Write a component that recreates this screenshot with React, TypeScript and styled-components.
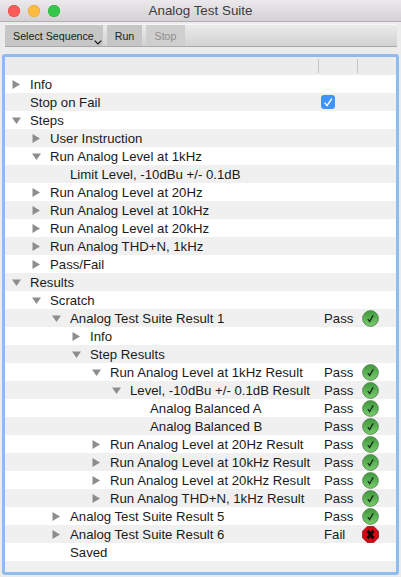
import styled, { createGlobalStyle } from "styled-components";

const GlobalStyle = createGlobalStyle`
  html, body {
    margin: 0;
    padding: 0;
    background: #ececec;
  }
  body {
    font-family: "Liberation Sans", Arial, sans-serif;
    color: #1a1a1a;
  }
`;

type Status = "pass" | "fail";

type RowData = {
  label: string;
  level: number;
  arrow?: "closed" | "open";
  result?: Status;
  checked?: boolean;
};

const rows: RowData[] = [
  { label: "Info", level: 0, arrow: "closed" },
  { label: "Stop on Fail", level: 0, checked: true },
  { label: "Steps", level: 0, arrow: "open" },
  { label: "User Instruction", level: 1, arrow: "closed" },
  { label: "Run Analog Level at 1kHz", level: 1, arrow: "open" },
  { label: "Limit Level, -10dBu +/- 0.1dB", level: 2 },
  { label: "Run Analog Level at 20Hz", level: 1, arrow: "closed" },
  { label: "Run Analog Level at 10kHz", level: 1, arrow: "closed" },
  { label: "Run Analog Level at 20kHz", level: 1, arrow: "closed" },
  { label: "Run Analog THD+N, 1kHz", level: 1, arrow: "closed" },
  { label: "Pass/Fail", level: 1, arrow: "closed" },
  { label: "Results", level: 0, arrow: "open" },
  { label: "Scratch", level: 1, arrow: "open" },
  { label: "Analog Test Suite Result 1", level: 2, arrow: "open", result: "pass" },
  { label: "Info", level: 3, arrow: "closed" },
  { label: "Step Results", level: 3, arrow: "open" },
  { label: "Run Analog Level at 1kHz Result", level: 4, arrow: "open", result: "pass" },
  { label: "Level, -10dBu +/- 0.1dB Result", level: 5, arrow: "open", result: "pass" },
  { label: "Analog Balanced A", level: 6, result: "pass" },
  { label: "Analog Balanced B", level: 6, result: "pass" },
  { label: "Run Analog Level at 20Hz Result", level: 4, arrow: "closed", result: "pass" },
  { label: "Run Analog Level at 10kHz Result", level: 4, arrow: "closed", result: "pass" },
  { label: "Run Analog Level at 20kHz Result", level: 4, arrow: "closed", result: "pass" },
  { label: "Run Analog THD+N, 1kHz Result", level: 4, arrow: "closed", result: "pass" },
  { label: "Analog Test Suite Result 5", level: 2, arrow: "closed", result: "pass" },
  { label: "Analog Test Suite Result 6", level: 2, arrow: "closed", result: "fail" },
  { label: "Saved", level: 2 },
];

const Arrow = ({ open }: { open: boolean }) => (
  <ArrowSvg viewBox="0 0 9 9" width="9" height="9">
    {open ? <polygon points="0,1.5 9,1.5 4.5,8" /> : <polygon points="0.5,0 8,4.5 0.5,9" />}
  </ArrowSvg>
);

const PassIcon = () => (
  <svg viewBox="0 0 17 17" width="17" height="17">
    <defs>
      <linearGradient id="passFill" x1="0" y1="0" x2="0" y2="1">
        <stop offset="0" stopColor="#3f983c" />
        <stop offset="1" stopColor="#78cc6c" />
      </linearGradient>
    </defs>
    <circle cx="8.5" cy="8.5" r="7.9" fill="url(#passFill)" stroke="#5c8a58" strokeWidth="0.9" />
    <path d="M5.8 9 L7.6 11.6 L11.2 5.4" fill="none" stroke="#12281a" strokeWidth="1.3" />
  </svg>
);

const FailIcon = () => (
  <svg viewBox="0 0 17 17" width="17" height="17">
    <polygon
      points="5.2,0.5 11.8,0.5 16.5,5.2 16.5,11.8 11.8,16.5 5.2,16.5 0.5,11.8 0.5,5.2"
      fill="#d80612"
      stroke="#8c1a1f"
      strokeWidth="0.8"
    />
    <path d="M5.6 4.6 L11.4 12.4 M11.4 4.6 L5.6 12.4" stroke="#140404" strokeWidth="3" />
  </svg>
);

const CheckIcon = () => (
  <svg viewBox="0 0 14 14" width="14" height="14">
    <path d="M3.6 7.6 L6 10.6 L10.8 3.6" fill="none" stroke="#fff" strokeWidth="1.5" />
  </svg>
);

export default function App() {
  return (
    <>
      <GlobalStyle />
      <Window>
        <TitleBar>
          <Lights>
            <Light $color="#fc5b57" $edge="#e24640" />
            <Light $color="#fdbc40" $edge="#df9e32" />
            <Light $color="#34c84a" $edge="#2aac3a" />
          </Lights>
          <Title>Analog Test Suite</Title>
        </TitleBar>
        <Toolbar>
          <ToolButton $width={98} $menu>
            Select Sequence
            <Chevron viewBox="0 0 8 5" width="8" height="5">
              <path d="M0.7 0.7 L4 4 L7.3 0.7" fill="none" stroke="#111" strokeWidth="1.2" />
            </Chevron>
          </ToolButton>
          <ToolButton $width={35}>Run</ToolButton>
          <ToolButton $width={39} $disabled>
            Stop
          </ToolButton>
        </Toolbar>
        <Tree>
          <HeaderRow>
            <HeaderCell />
            <HeaderCell $width={39} $divider />
            <HeaderCell $width={39} $divider />
          </HeaderRow>
          {rows.map((row, index) => (
            <Row key={index} $odd={index % 2 === 1}>
              <NameCell $level={row.level}>
                <ArrowSlot>{row.arrow && <Arrow open={row.arrow === "open"} />}</ArrowSlot>
                {row.label}
              </NameCell>
              <ValueCell>
                {row.result && <ResultText>{row.result === "pass" ? "Pass" : "Fail"}</ResultText>}
                {row.checked && (
                  <CheckBox>
                    <CheckIcon />
                  </CheckBox>
                )}
              </ValueCell>
              <IconCell>
                {row.result === "pass" && <PassIcon />}
                {row.result === "fail" && <FailIcon />}
              </IconCell>
            </Row>
          ))}
          <Row $odd />
        </Tree>
      </Window>
    </>
  );
}

const Window = styled.div`
  width: 401px;
  height: 577px;
  display: flex;
  flex-direction: column;
  background: #ececec;
  overflow: hidden;
`;

const TitleBar = styled.div`
  position: relative;
  height: 22px;
  flex: none;
  display: flex;
  align-items: center;
  justify-content: center;
  background: linear-gradient(#ebe9eb, #d3d1d3);
  border-bottom: 1px solid #b1afb1;
  box-sizing: border-box;
`;

const Lights = styled.div`
  position: absolute;
  left: 8px;
  top: 5px;
  display: flex;
  gap: 8px;
`;

const Light = styled.span<{ $color: string; $edge: string }>`
  width: 12px;
  height: 12px;
  border-radius: 50%;
  background: ${(p) => p.$color};
  box-shadow: inset 0 0 0 0.5px ${(p) => p.$edge};
`;

const Title = styled.div`
  font-size: 13.4px;
  color: #3c3c3c;
`;

const Toolbar = styled.div`
  height: 23px;
  flex: none;
  margin: 2px 4px 0 5px;
  display: flex;
  gap: 4px;
  background: linear-gradient(#ebebeb, #d2d2d2);
  border-top: 1px solid #f6f6f6;
  border-bottom: 1px solid #a9a9a9;
  box-sizing: border-box;
`;

const ToolButton = styled.div<{ $width: number; $disabled?: boolean; $menu?: boolean }>`
  position: relative;
  display: flex;
  align-items: center;
  justify-content: ${(p) => (p.$menu ? "flex-start" : "center")};
  width: ${(p) => p.$width}px;
  padding-left: ${(p) => (p.$menu ? 8 : 0)}px;
  box-sizing: border-box;
  font-size: 10.7px;
  background: ${(p) => (p.$disabled ? "#cfcfcf" : "#c6c6c6")};
  color: ${(p) => (p.$disabled ? "#8e8e8e" : "#1c1c1c")};
`;

const Chevron = styled.svg`
  position: absolute;
  right: 1px;
  bottom: 1px;
`;

const Tree = styled.div`
  flex: 1;
  margin: 7px 2px 2px 2px;
  border: 3px solid #8fbcef;
  border-radius: 3px;
  background: #fff;
  overflow: hidden;
`;

const HeaderRow = styled.div`
  height: 18px;
  display: flex;
  align-items: center;
  background: #ececec;
`;

const HeaderCell = styled.div<{ $width?: number; $divider?: boolean }>`
  flex: ${(p) => (p.$width ? `0 0 ${p.$width}px` : 1)};
  height: 14px;
  box-sizing: border-box;
  border-left: ${(p) => (p.$divider ? "1px solid #c4c4c4" : "none")};
`;

const Row = styled.div<{ $odd?: boolean }>`
  height: 18px;
  display: flex;
  align-items: center;
  font-size: 13.2px;
  color: #1a1a1a;
  background: ${(p) => (p.$odd ? "#f0f0f0" : "#fff")};
`;

const NameCell = styled.div<{ $level: number }>`
  flex: 1;
  display: flex;
  align-items: center;
  white-space: nowrap;
  overflow: hidden;
  padding-left: ${(p) => 7 + p.$level * 20}px;
`;

const ArrowSlot = styled.span`
  flex: none;
  width: 18px;
  display: flex;
  align-items: center;
`;

const ArrowSvg = styled.svg`
  fill: #8d8d8d;
`;

const ValueCell = styled.div`
  flex: 0 0 39px;
  display: flex;
  align-items: center;
`;

const ResultText = styled.span`
  margin-left: 6px;
`;

const IconCell = styled.div`
  flex: 0 0 39px;
  display: flex;
  align-items: center;
  padding-left: 5px;
  box-sizing: border-box;
`;

const CheckBox = styled.span`
  width: 14px;
  height: 14px;
  margin-left: 3px;
  display: flex;
  align-items: center;
  justify-content: center;
  border-radius: 3px;
  background: #3e95f7;
`;
